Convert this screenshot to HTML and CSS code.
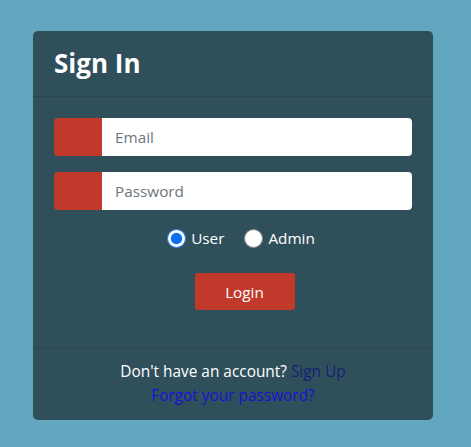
FILE: index.html
```html
<!DOCTYPE html>
<html>
<head>
<meta charset="utf-8">
<link rel="stylesheet" href="styles.css">
</head>
<body>
<div class="card">
  <div class="card-header"><h3 class="title">Sign In</h3></div>
  <div class="card-body">
    <div class="input-group">
      <span class="prepend"></span>
      <input class="field" type="text" placeholder="Email">
    </div>
    <div class="input-group">
      <span class="prepend"></span>
      <input class="field" type="password" placeholder="Password">
    </div>
    <div class="radios">
      <label class="radio"><input type="radio" name="role" checked> User</label>
      <label class="radio"><input type="radio" name="role"> Admin</label>
    </div>
    <div class="actions"><button class="btn">Login</button></div>
  </div>
  <div class="card-footer">
    <div class="line">Don't have an account? <a class="signup" href="#">Sign Up</a></div>
    <div class="line"><a class="forgot" href="#">Forgot your password?</a></div>
  </div>
</div>
</body>
</html>
```
FILE: styles.css
```css
html, body { margin: 0; padding: 0; }
body {
  background: #62a6c0;
  font-family: "Open Sans", "Noto Sans", sans-serif;
  font-size: 15px;
  color: #fff;
  padding-top: 31px;
  height: 447px;
  box-sizing: border-box;
}
.card {
  width: 400px;
  margin-left: 33px;
  background: #2f4f5b;
  border-radius: 5px;
  box-sizing: border-box;
  height: 389px;
  display: flex;
  flex-direction: column;
}
.card-header {
  height: 66px;
  box-sizing: border-box;
  border-bottom: 1px solid #294651;
  padding: 0 21px 1px;
  display: flex;
  align-items: center;
}
.title {
  margin: 0;
  font-size: 26px;
  font-weight: 700;
  line-height: 1;
}
.card-body {
  padding: 21px 21px 0;
  flex: 1;
}
.input-group {
  display: flex;
  height: 38px;
  margin-bottom: 16px;
}
.prepend {
  width: 48px;
  background: #c0392b;
  border-radius: 4px 0 0 4px;
}
.field {
  flex: 1;
  border: none;
  border-radius: 0 4px 4px 0;
  padding: 0 13px;
  font-family: inherit;
  font-size: 15.3px;
  color: #495057;
  outline: none;
}
.field::placeholder { color: #6c757d; }
.radios {
  display: flex;
  justify-content: center;
  gap: 20px;
  margin-top: -3px;
  margin-left: 16px;
  height: 30px;
  align-items: center;
}
.radio {
  display: flex;
  align-items: center;
  gap: 5px;
  font-size: 15.3px;
}
.radio input {
  margin: 0;
  width: 19px;
  height: 19px;
  accent-color: #0b6ff0;
}
.actions {
  display: flex;
  justify-content: center;
  margin-top: 20px;
  margin-left: 23px;
}
.btn {
  width: 100px;
  height: 37px;
  background: #c0392b;
  color: #fff;
  border: none;
  border-radius: 3px;
  font-family: inherit;
  font-size: 15.3px;
}
.card-footer {
  height: 73px;
  box-sizing: border-box;
  border-top: 1px solid #294651;
  display: flex;
  flex-direction: column;
  align-items: center;
  justify-content: center;
  font-size: 15.4px;
}
.line { line-height: 24px; }
.signup { color: #14217a; text-decoration: none; }
.forgot { color: #1414d2; text-decoration: none; }
```
